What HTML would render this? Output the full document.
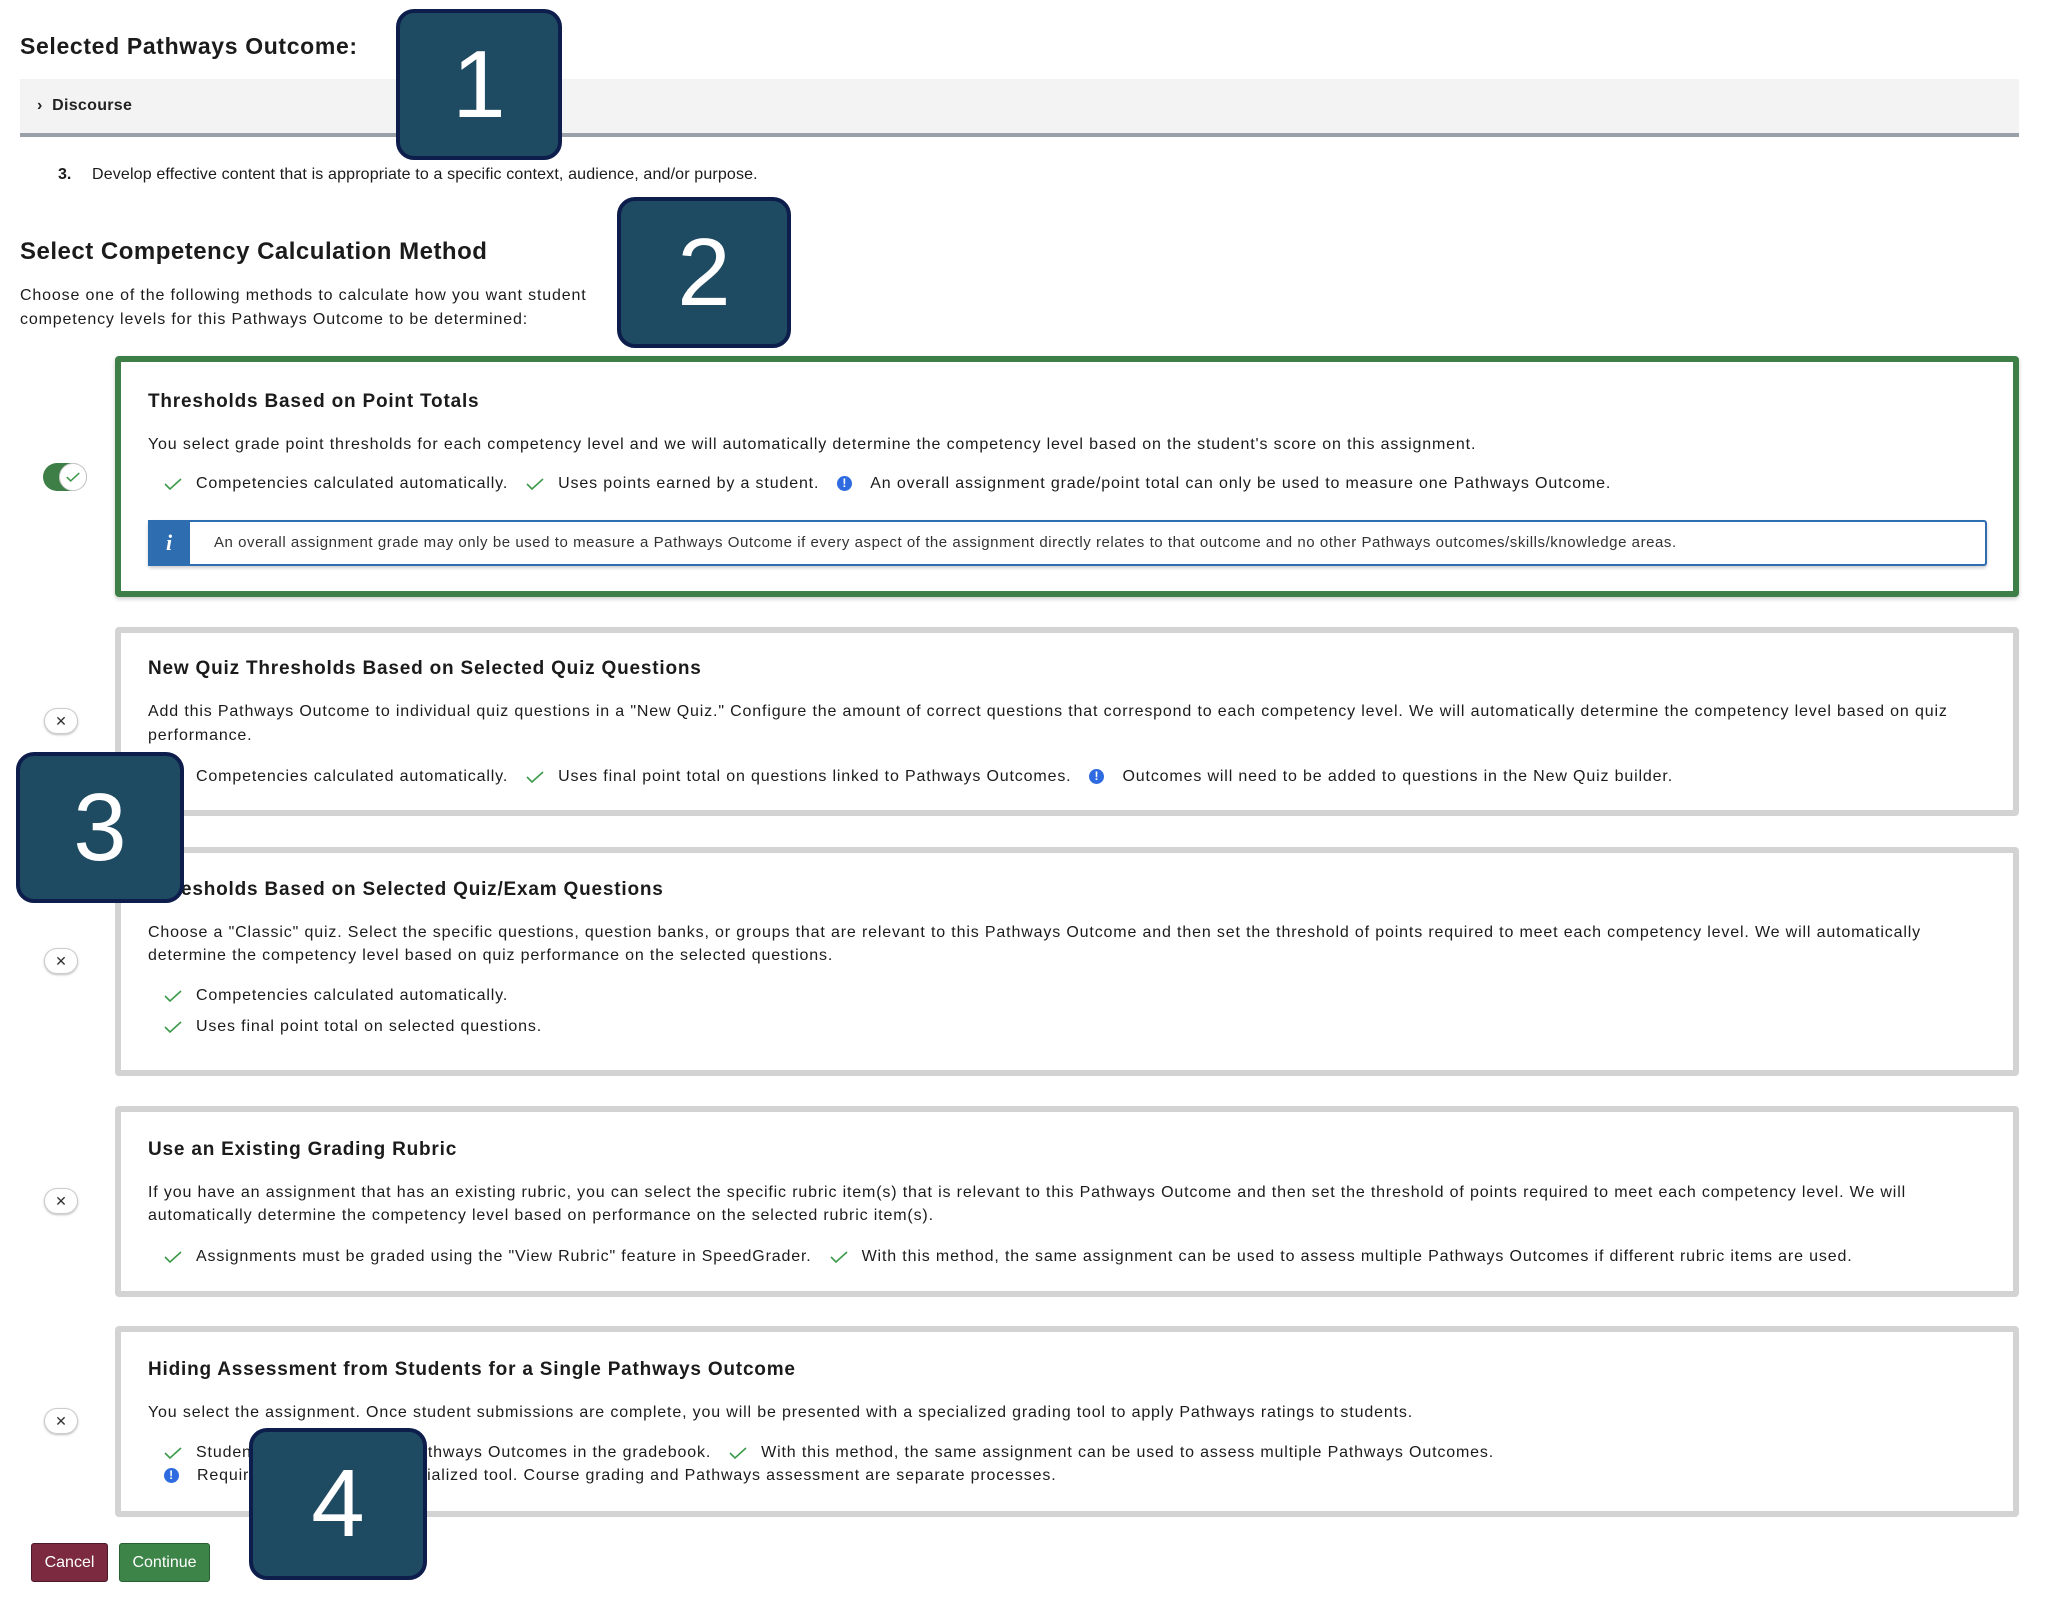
<!DOCTYPE html>
<html><head><meta charset="utf-8"><style>
*{margin:0;padding:0;box-sizing:border-box}
body{width:2058px;height:1602px;background:#fff;position:relative;overflow:hidden;font-family:"Liberation Sans",Arial,sans-serif;color:#1b1b1b}
.a{position:absolute;white-space:nowrap}
.t{font-size:16px;letter-spacing:.85px;line-height:24px}
.h{font-size:19px;font-weight:bold;letter-spacing:.8px;line-height:24px}
.card{position:absolute;left:115px;width:1904px;background:#fff;border:6px solid #d3d3d3;border-radius:4px}
.badge{position:absolute;background:#1f4b62;border:4px solid #0d1d4c;border-radius:18px;color:#fff;font-size:96px;display:flex;align-items:center;justify-content:center;line-height:1}
.x{position:absolute;left:44px;width:34px;height:26px;border-radius:13px;background:#fff;border:1px solid #ccc;box-shadow:0 1px 2px rgba(0,0,0,.25);font-size:14px;text-align:center;line-height:24px;color:#333}
.ck{display:inline-block;width:18px;height:12px;vertical-align:middle;margin-right:14px}
.inf{display:inline-block;width:15px;height:15px;border-radius:50%;background:#2f6be0;color:#fff;font-size:12px;font-weight:bold;text-align:center;line-height:15px;vertical-align:middle;margin-right:18px}
.row span.g{display:inline-block;width:18px}
</style></head><body>
<svg width="0" height="0" style="position:absolute"><symbol id="c" viewBox="0 0 18 12"><path d="M1 6 L6 11 L17 1" fill="none" stroke="#3c9a4a" stroke-width="1.6"/></symbol></svg>

<div class="a" style="left:20px;top:33px;font-size:23px;font-weight:bold;letter-spacing:.65px">Selected Pathways Outcome:</div>
<div class="a" style="left:20px;top:79px;width:1999px;height:58px;background:#f3f3f3;border-bottom:4px solid #9aa0aa"></div>
<div class="a" style="left:37px;top:97px;font-size:16px;font-weight:bold;color:#222;letter-spacing:.3px">›&nbsp; Discourse</div>
<div class="a" style="left:58px;top:166px;font-size:16px;font-weight:bold">3.</div>
<div class="a" style="left:92px;top:166px;font-size:16px;letter-spacing:.15px">Develop effective content that is appropriate to a specific context, audience, and/or purpose.</div>

<div class="a" style="left:20px;top:238px;font-size:24px;font-weight:bold;letter-spacing:.5px">Select Competency Calculation Method</div>
<div class="a t" style="left:20px;top:284px;letter-spacing:.85px">Choose one of the following methods to calculate how you want student</div>
<div class="a t" style="left:20px;top:308px;letter-spacing:.85px">competency levels for this Pathways Outcome to be determined:</div>

<!-- card 1 -->
<div class="card" style="top:356px;height:241px;border-color:#3d7f46;box-shadow:0 2px 4px rgba(0,0,0,.2)"></div>
<div class="a h" style="left:148px;top:390px">Thresholds Based on Point Totals</div>
<div class="a t" style="left:148px;top:433px">You select grade point thresholds for each competency level and we will automatically determine the competency level based on the student's score on this assignment.</div>
<div class="a t row" style="left:164px;top:472px"><svg class="ck"><use href="#c"/></svg>Competencies calculated automatically.<span class="g"></span><svg class="ck"><use href="#c"/></svg>Uses points earned by a student.<span class="g"></span><span class="inf">!</span>An overall assignment grade/point total can only be used to measure one Pathways Outcome.</div>
<div class="a" style="left:148px;top:520px;width:1839px;height:46px;border:2px solid #2e6db0;border-radius:3px;box-shadow:0 2px 3px rgba(0,0,0,.2)"></div>
<div class="a" style="left:148px;top:520px;width:42px;height:46px;background:#2e6db0;color:#fff;font-family:'Liberation Serif',serif;font-style:italic;font-weight:bold;font-size:22px;text-align:center;line-height:46px">i</div>
<div class="a" style="left:214px;top:534px;font-size:15px;color:#333;letter-spacing:.55px">An overall assignment grade may only be used to measure a Pathways Outcome if every aspect of the assignment directly relates to that outcome and no other Pathways outcomes/skills/knowledge areas.</div>
<div class="a" style="left:43px;top:463px;width:44px;height:28px;border-radius:14px;background:#3d7f46"></div>
<div class="a" style="left:59px;top:463px;width:28px;height:28px;border-radius:14px;background:#fff;border:1px solid #ccc"></div>
<svg class="a" style="left:66px;top:472px" width="14" height="10" viewBox="0 0 18 12"><path d="M1 6 L6 11 L17 1" fill="none" stroke="#3c9a4a" stroke-width="2"/></svg>

<!-- card 2 -->
<div class="card" style="top:627px;height:189px"></div>
<div class="a h" style="left:148px;top:657px">New Quiz Thresholds Based on Selected Quiz Questions</div>
<div class="a t" style="left:148px;top:700px">Add this Pathways Outcome to individual quiz questions in a "New Quiz." Configure the amount of correct questions that correspond to each competency level. We will automatically determine the competency level based on quiz</div>
<div class="a t" style="left:148px;top:724px">performance.</div>
<div class="a t row" style="left:164px;top:765px"><svg class="ck"><use href="#c"/></svg>Competencies calculated automatically.<span class="g"></span><svg class="ck"><use href="#c"/></svg>Uses final point total on questions linked to Pathways Outcomes.<span class="g"></span><span class="inf">!</span>Outcomes will need to be added to questions in the New Quiz builder.</div>
<div class="x" style="top:708px">✕</div>

<!-- card 3 -->
<div class="card" style="top:847px;height:229px"></div>
<div class="a h" style="left:148px;top:878px">Thresholds Based on Selected Quiz/Exam Questions</div>
<div class="a t" style="left:148px;top:921px">Choose a "Classic" quiz. Select the specific questions, question banks, or groups that are relevant to this Pathways Outcome and then set the threshold of points required to meet each competency level. We will automatically</div>
<div class="a t" style="left:148px;top:944px">determine the competency level based on quiz performance on the selected questions.</div>
<div class="a t row" style="left:164px;top:984px"><svg class="ck"><use href="#c"/></svg>Competencies calculated automatically.</div>
<div class="a t row" style="left:164px;top:1015px"><svg class="ck"><use href="#c"/></svg>Uses final point total on selected questions.</div>
<div class="x" style="top:948px">✕</div>

<!-- card 4 -->
<div class="card" style="top:1106px;height:191px"></div>
<div class="a h" style="left:148px;top:1138px">Use an Existing Grading Rubric</div>
<div class="a t" style="left:148px;top:1181px">If you have an assignment that has an existing rubric, you can select the specific rubric item(s) that is relevant to this Pathways Outcome and then set the threshold of points required to meet each competency level. We will</div>
<div class="a t" style="left:148px;top:1204px">automatically determine the competency level based on performance on the selected rubric item(s).</div>
<div class="a t row" style="left:164px;top:1245px"><svg class="ck"><use href="#c"/></svg>Assignments must be graded using the "View Rubric" feature in SpeedGrader.<span class="g"></span><svg class="ck"><use href="#c"/></svg>With this method, the same assignment can be used to assess multiple Pathways Outcomes if different rubric items are used.</div>
<div class="x" style="top:1188px">✕</div>

<!-- card 5 -->
<div class="card" style="top:1326px;height:191px"></div>
<div class="a h" style="left:148px;top:1358px">Hiding Assessment from Students for a Single Pathways Outcome</div>
<div class="a t" style="left:148px;top:1401px">You select the assignment. Once student submissions are complete, you will be presented with a specialized grading tool to apply Pathways ratings to students.</div>
<div class="a t row" style="left:164px;top:1441px"><svg class="ck"><use href="#c"/></svg>Students will not see their Pathways Outcomes in the gradebook.<span class="g"></span><svg class="ck"><use href="#c"/></svg>With this method, the same assignment can be used to assess multiple Pathways Outcomes.</div>
<div class="a t row" style="left:164px;top:1464px"><span class="inf">!</span>Requires grading with a specialized tool. Course grading and Pathways assessment are separate processes.</div>
<div class="x" style="top:1408px">✕</div>

<div class="a" style="left:31px;top:1543px;width:77px;height:39px;background:#7b2a3f;border:1px solid #4a1a2a;border-radius:3px;color:#fff;font-size:16px;text-align:center;line-height:37px">Cancel</div>
<div class="a" style="left:119px;top:1543px;width:91px;height:39px;background:#3c8447;border:1px solid #2a5e33;border-radius:3px;color:#fff;font-size:16px;text-align:center;line-height:37px">Continue</div>

<div class="badge" style="left:396px;top:9px;width:166px;height:151px">1</div>
<div class="badge" style="left:617px;top:197px;width:174px;height:151px">2</div>
<div class="badge" style="left:16px;top:752px;width:168px;height:151px">3</div>
<div class="badge" style="left:249px;top:1428px;width:178px;height:152px">4</div>
</body></html>
